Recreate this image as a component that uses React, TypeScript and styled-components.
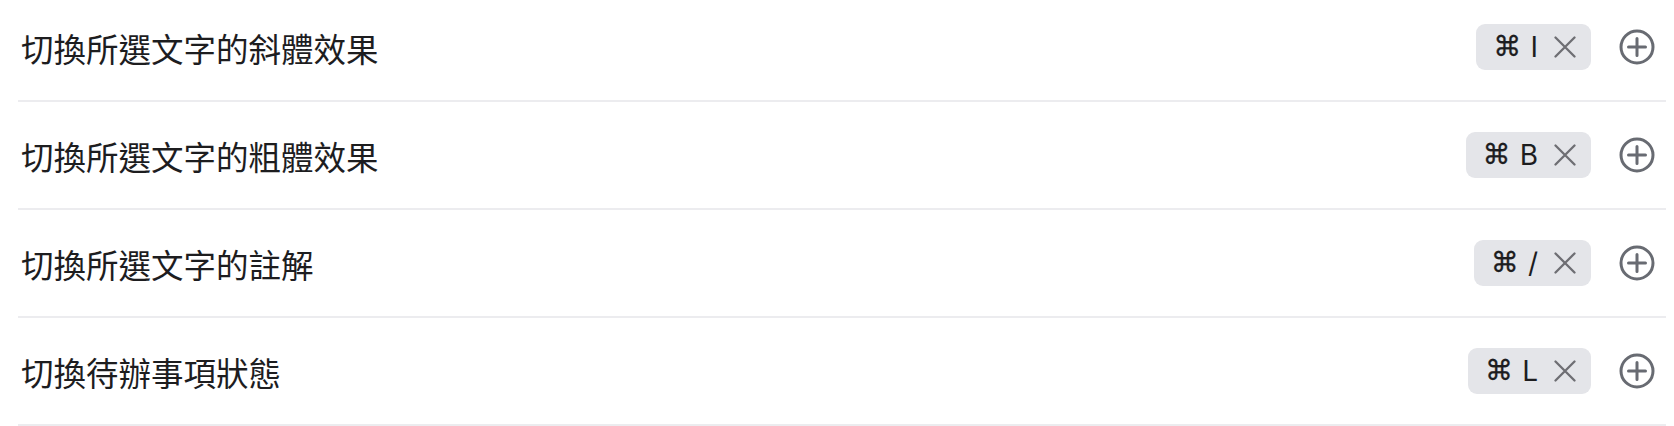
import React from "react";
import styled, { createGlobalStyle } from "styled-components";

const GlobalStyle = createGlobalStyle`
  html, body {
    margin: 0;
    padding: 0;
    background: #ffffff;
  }
  body {
    font-family: "Noto Sans CJK TC", "Noto Sans", sans-serif;
    overflow: hidden;
  }
`;

const List = styled.ul`
  list-style: none;
  margin: -6px 8px 0 18px;
  padding: 0;
`;

const Row = styled.li`
  display: flex;
  align-items: center;
  height: 106px;
  border-bottom: 2px solid #ececef;
  padding: 0 11px 0 3px;
`;

const Title = styled.span`
  flex: 1;
  font-family: "Noto Sans CJK TC", "Noto Sans", sans-serif;
  font-size: 32.5px;
  color: #1d1d1f;
`;

const Shortcut = styled.div`
  display: flex;
  align-items: center;
  height: 46px;
  padding: 0 15px 0 17px;
  border-radius: 9px;
  background: #e4e5e9;
  box-sizing: border-box;
`;

const Keys = styled.span`
  display: flex;
  align-items: center;
  gap: 9px;
  font-family: "Inter", "DejaVu Sans", sans-serif;
  font-size: 28px;
  font-weight: 400;
  color: #1d1d1f;
`;

const Key = styled.span`
  line-height: 1;
`;

const Cmd = styled.span`
  font-family: "DejaVu Sans", sans-serif;
  font-size: 28px;
  font-weight: 400;
  line-height: 1;
  color: #1d1d1f;
  -webkit-text-stroke: 0.3px #1d1d1f;
`;

const RemoveButton = styled.button`
  display: flex;
  align-items: center;
  justify-content: center;
  margin-left: 16px;
  padding: 0;
  border: 0;
  background: transparent;
  color: #6e6e73;
  cursor: pointer;
`;

const AddButton = styled.button`
  display: flex;
  align-items: center;
  justify-content: center;
  margin-left: 28px;
  padding: 0;
  border: 0;
  background: transparent;
  color: #686b72;
  cursor: pointer;
`;

const XIcon = () => (
  <svg width="22" height="22" viewBox="0 0 22 22" fill="none">
    <path d="M1.5 1.5 L20.5 20.5 M20.5 1.5 L1.5 20.5" stroke="currentColor" strokeWidth="2.3" strokeLinecap="round" />
  </svg>
);

const PlusCircle = () => (
  <svg width="36" height="36" viewBox="0 0 36 36" fill="none">
    <circle cx="18" cy="18" r="16" stroke="currentColor" strokeWidth="3" />
    <path d="M18 9.5 V26.5 M9.5 18 H26.5" stroke="currentColor" strokeWidth="3" strokeLinecap="round" />
  </svg>
);

const items = [
  { title: "切換所選文字的斜體效果", key: "I" },
  { title: "切換所選文字的粗體效果", key: "B" },
  { title: "切換所選文字的註解", key: "/" },
  { title: "切換待辦事項狀態", key: "L" },
];

export default function App() {
  return (
    <>
      <GlobalStyle />
      <List>
        {items.map((it) => (
          <Row key={it.title}>
            <Title>{it.title}</Title>
            <Shortcut>
              <Keys>
                <Cmd>⌘</Cmd>
                <Key>{it.key}</Key>
              </Keys>
              <RemoveButton aria-label="移除">
                <XIcon />
              </RemoveButton>
            </Shortcut>
            <AddButton aria-label="新增">
              <PlusCircle />
            </AddButton>
          </Row>
        ))}
      </List>
    </>
  );
}
